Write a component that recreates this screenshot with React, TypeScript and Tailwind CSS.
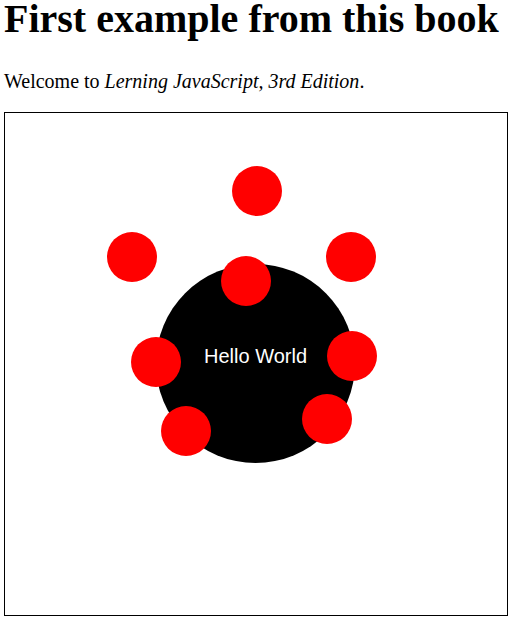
const dots = [
  { x: 252, y: 78 },
  { x: 127, y: 144 },
  { x: 346, y: 144 },
  { x: 241, y: 168 },
  { x: 151, y: 249 },
  { x: 347, y: 243 },
  { x: 181, y: 318 },
  { x: 322, y: 306 },
];

export default function App() {
  return (
    <div className="min-h-screen bg-white px-[4px] text-black font-['Liberation_Serif','Times_New_Roman',serif]">
      <h1 className="text-[40px] font-bold leading-[38px] whitespace-nowrap">First example from this book</h1>
      <p className="mt-[33px] text-[20px] leading-[20px]">
        Welcome to <em>Lerning JavaScript, 3rd Edition</em>.
      </p>
      <div className="mt-[21px] w-[504px] h-[504px] border border-black">
        <svg width="502" height="502" viewBox="0 0 502 502" className="block">
          <circle cx="250.5" cy="250.5" r="99.5" fill="#000" />
          <text
            x="250.5"
            y="250"
            textAnchor="middle"
            fill="#fff"
            fontSize="20"
            fontFamily="'Liberation Sans', Arial, sans-serif"
          >
            Hello World
          </text>
          {dots.map((d, i) => (
            <circle key={i} cx={d.x} cy={d.y} r="25" fill="#ff0000" />
          ))}
        </svg>
      </div>
    </div>
  );
}
